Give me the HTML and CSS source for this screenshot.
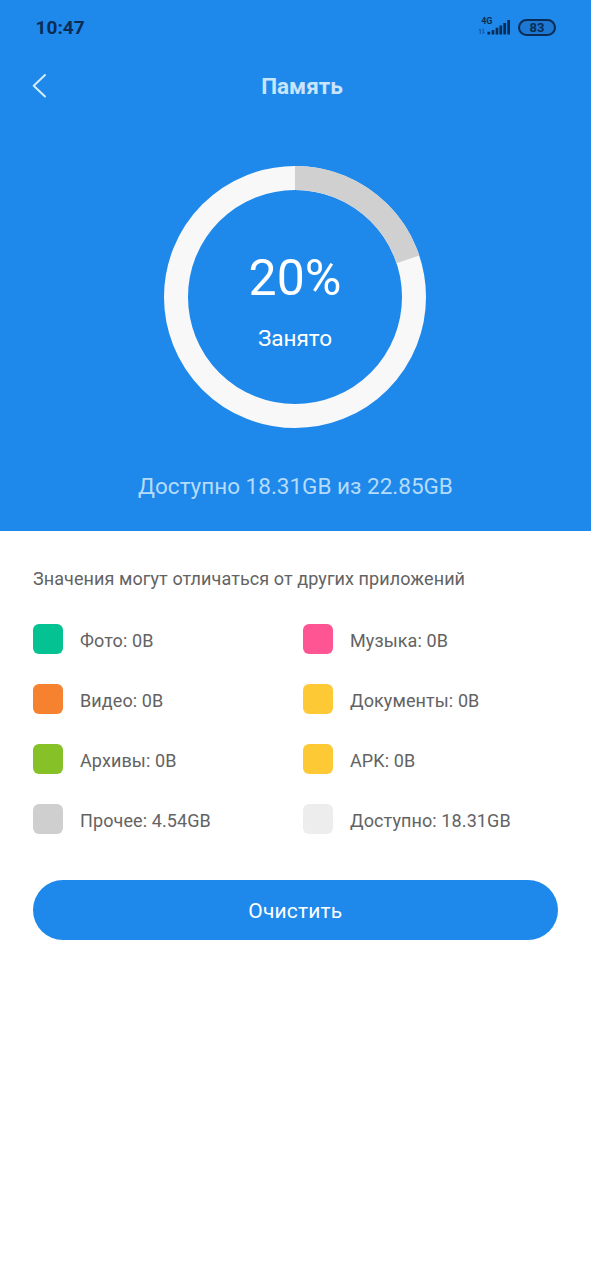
FILE: index.html
```html
<!DOCTYPE html>
<html lang="ru">
<head>
<meta charset="utf-8">
<title>Память</title>
<link rel="stylesheet" href="styles.css">
</head>
<body>
<header class="hero">
  <div class="status">
    <span class="time">10:47</span>
    <div class="status-icons">
      <svg class="signal" width="32" height="20" viewBox="0 0 32 20">
        <text class="network" x="3.2" y="7.400">4G</text>
        <path class="arrows" d="M2.200 17v-5l-1 1.200M5.200 11.500v5l1-1.200"/>
        <path class="bars" d="M10.800 17.500v-2.800M15 17.500v-4.500M19 17.500v-6.700M22.800 17.500v-9M26.700 17.500v-11.500M30.600 17.500v-14.500"/>
      </svg>
      <span class="battery">83</span>
    </div>
  </div>
  <nav class="bar">
    <svg class="back" width="16" height="26" viewBox="0 0 16 26"><path d="M14 2 2.700 12.700 14 23.500"/></svg>
    <h1 class="title">Память</h1>
  </nav>
  <div class="chart">
    <svg class="ring" width="262" height="262" viewBox="0 0 262 262">
      <circle class="ring-free" cx="131" cy="131" r="119"/>
      <circle class="ring-used" cx="131" cy="131" r="119" pathLength="100" transform="rotate(-90 131 131)"/>
    </svg>
    <div class="reading">
      <span class="percent">20%</span>
      <span class="caption">Занято</span>
    </div>
  </div>
  <p class="available">Доступно 18.31GB из 22.85GB</p>
</header>
<main class="details">
  <p class="note">Значения могут отличаться от других приложений</p>
  <ul class="legend">
    <li class="item"><i class="swatch photo"></i><span>Фото: 0B</span></li>
    <li class="item"><i class="swatch music"></i><span>Музыка: 0B</span></li>
    <li class="item"><i class="swatch video"></i><span>Видео: 0B</span></li>
    <li class="item"><i class="swatch docs"></i><span>Документы: 0B</span></li>
    <li class="item"><i class="swatch archives"></i><span>Архивы: 0B</span></li>
    <li class="item"><i class="swatch apk"></i><span>APK: 0B</span></li>
    <li class="item"><i class="swatch other"></i><span>Прочее: 4.54GB</span></li>
    <li class="item"><i class="swatch free"></i><span>Доступно: 18.31GB</span></li>
  </ul>
  <button class="clean" type="button">Очистить</button>
</main>
</body>
</html>
```

FILE: styles.css
```css
* { box-sizing: border-box; margin: 0; padding: 0; }
body { min-height: 1280px; background: #fff; font-family: Roboto, sans-serif; color: #636363; }
.hero { height: 531px; background: #1f88eb; }
.status { display: flex; justify-content: space-between; height: 54px; padding: 0 35px 0 35.500px; align-items: center; color: #0a2c55; }
.time { font-size: 19px; font-weight: 700; letter-spacing: .05px; }
.status-icons { display: flex; align-items: center; gap: 8px; }
.signal { display: block; }
.network { font-size: 9px; font-weight: 700; fill: #0a2c55; }
.arrows { fill: none; stroke: #14509a; stroke-width: 1; }
.bars { fill: none; stroke: #0a2c55; stroke-width: 2.700; }
.battery { width: 38px; height: 17px; border: 2px solid #0a2c55; border-radius: 9px; font-size: 13px; line-height: 13.500px; font-weight: 700; text-align: center; background: #1c78d2; }
.bar { display: grid; grid-template-columns: 16px 1fr 16px; align-items: center; height: 64px; padding: 0 31px; }
.back { fill: none; stroke: #d5ecfb; stroke-width: 2; stroke-linecap: round; stroke-linejoin: round; }
.title { font-size: 22.500px; font-weight: 700; text-align: center; color: #c9e5fc; padding-left: 13px; }
.chart { display: grid; justify-content: center; width: 590px; margin-top: 48px; }
.chart > * { grid-area: 1 / 1; }
.ring { display: block; }
.ring circle { fill: none; stroke-width: 24; }
.ring-free { stroke: #f8f8f8; }
.ring-used { stroke: #d0d0d0; stroke-dasharray: 19.870 100; }
.reading { display: flex; flex-direction: column; align-items: center; padding-top: 82px; color: #fff; }
.percent { font-size: 50px; line-height: 60px; }
.caption { font-size: 22.500px; line-height: 30px; margin-top: 15px; }
.available { margin-top: 43px; font-size: 22.500px; line-height: 30px; text-align: center; color: #b5dcfa; }
.details { padding: 36px 33px; }
.note { font-size: 18px; line-height: 24px; letter-spacing: .085px; }
.legend { list-style: none; display: grid; grid-template-columns: 270px 1fr; row-gap: 30px; margin-top: 33px; }
.item { display: flex; align-items: center; gap: 17px; height: 30px; font-size: 18px; line-height: 30px; letter-spacing: .1px; }
.item span { padding-top: 3px; }
.swatch { width: 30px; height: 30px; border-radius: 6px; }
.photo { background: #05c293; }
.music { background: #ff5592; }
.video { background: #f6812f; }
.docs, .apk { background: #fdca35; }
.archives { background: #86c128; }
.other { background: #cfcfcf; }
.free { background: #ededed; }
.clean { display: block; width: 524.500px; height: 60px; margin-top: 46px; border: 0; border-radius: 30px; background: #1f88eb; color: #fff; font: 21px/60px Roboto, sans-serif; letter-spacing: .15px; padding-top: 1px; }
```
